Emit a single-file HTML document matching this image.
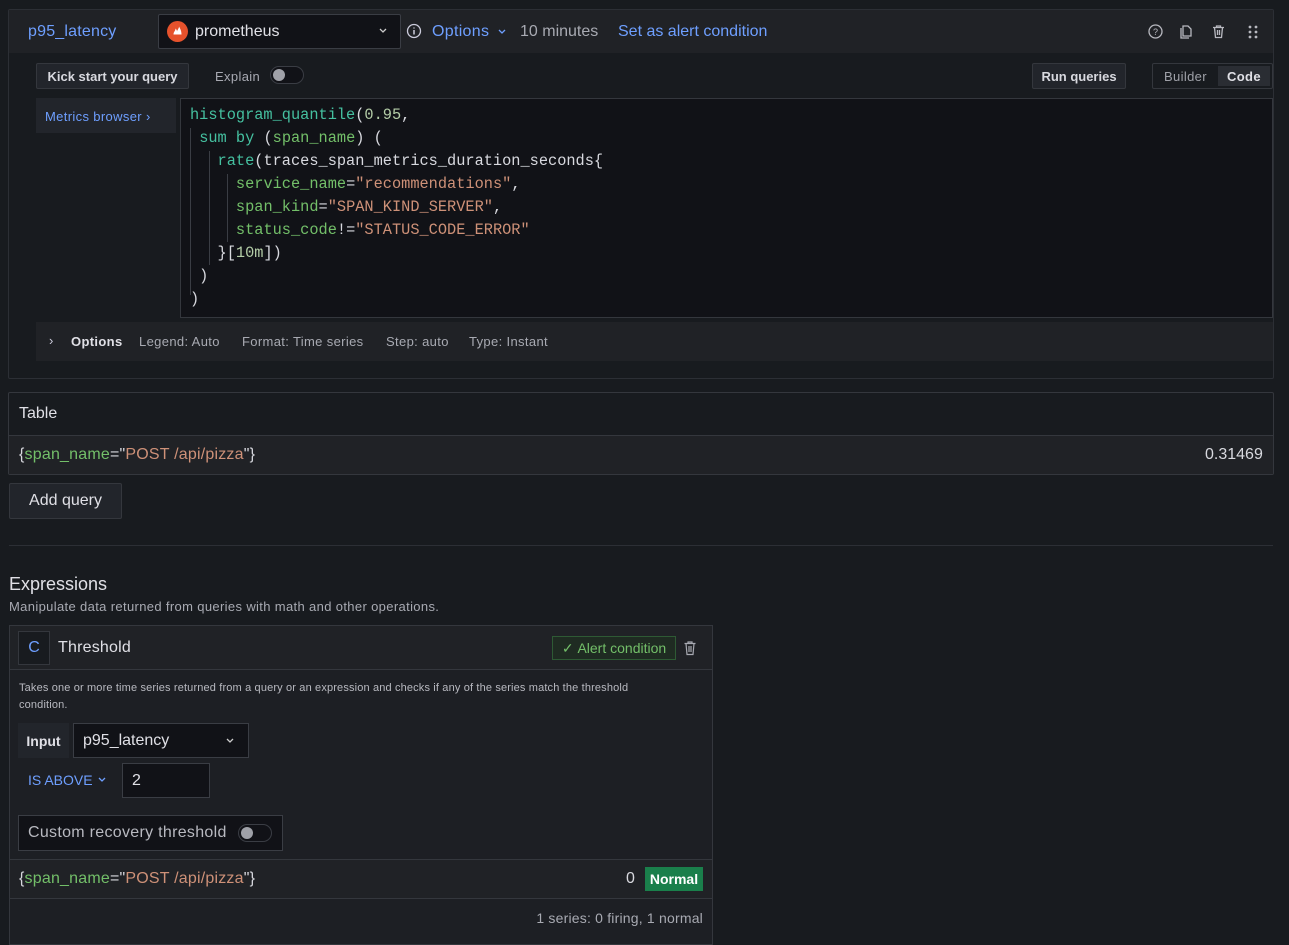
<!DOCTYPE html>
<html><head><meta charset="utf-8"><style>
*{box-sizing:border-box;margin:0;padding:0}
body{width:1289px;height:937px;background:#181b1f;font-family:"Liberation Sans",sans-serif;color:#ccccdc;position:relative;overflow:hidden;font-size:14px}
.a{position:absolute}
.mono{font-family:"Liberation Mono",monospace;font-size:15.3px;white-space:pre}
.bl{color:#6e9fff}
.lg{color:#73bf69}
.s{color:#ce9178}
.fn{color:#45c0a0}
.sm{letter-spacing:0.35px}
.btn{position:absolute;background:#22252b;border:1px solid #34373d;border-radius:2px;color:#d8d9df;font-weight:bold;font-size:13px;display:flex;align-items:center;justify-content:center}
.tog{position:absolute;width:34px;height:18px;border:1px solid #3a3d44;border-radius:9px;background:#111217}
.tog::after{content:"";position:absolute;left:2px;top:2px;width:12px;height:12px;border-radius:50%;background:#9fa1a8}
</style></head><body>
<div class="a" style="left:8px;top:9px;width:1266px;height:370px;border:1px solid #2c2f35;border-radius:2px"></div>
<div class="a" style="left:9px;top:10px;width:1264px;height:43px;background:#202226"></div>
<div class="a bl" style="left:28px;top:23px;font-size:16px;letter-spacing:0.2px">p95_latency</div>
<div class="a" style="left:158px;top:14px;width:243px;height:35px;background:#111217;border:1px solid #3a3d44;border-radius:2px"></div>
<div class="a" style="left:167px;top:21px;width:21px;height:21px;border-radius:50%;background:#e6522c"></div>
<svg class="a" style="left:167px;top:21px" width="21" height="21" viewBox="0 0 21 21"><path d="M7 15h7M7.5 17h6M6.5 13.5c0-3 2-3.5 2-6 1 1 1.5 2 1.5 3 .5-2 2-3 2-5 1 2 2.5 4 2.5 8z" fill="#fff"/></svg>
<div class="a" style="left:195px;top:23px;font-size:16px;color:#e0e0e6">prometheus</div>
<svg class="a" style="left:378px;top:27px" width="10" height="8" viewBox="0 0 10 8"><path d="M2 2l3 3 3-3" stroke="#ccc" fill="none" stroke-width="1.3"/></svg>
<svg class="a" style="left:406px;top:23px" width="16" height="16" viewBox="0 0 16 16"><circle cx="8" cy="8" r="6.5" stroke="#ccccdc" fill="none" stroke-width="1.3"/><path d="M8 7v4.5M8 4.5v1" stroke="#ccccdc" stroke-width="1.5"/></svg>
<div class="a bl" style="left:432px;top:23px;font-size:16px;letter-spacing:0.3px">Options</div>
<svg class="a" style="left:497px;top:28px" width="10" height="8" viewBox="0 0 10 8"><path d="M2 2l3 3 3-3" stroke="#6e9fff" fill="none" stroke-width="1.3"/></svg>
<div class="a" style="left:520px;top:23px;font-size:16px;color:#a8aab2">10 minutes</div>
<div class="a bl" style="left:618px;top:23px;font-size:16px">Set as alert condition</div>
<svg class="a" style="left:1147px;top:23px" width="17" height="17" viewBox="0 0 17 17"><circle cx="8.5" cy="8.5" r="6.5" stroke="#b8b9c0" fill="none" stroke-width="1.3"/><text x="8.5" y="12" font-size="9" fill="#b8b9c0" text-anchor="middle" font-family="Liberation Sans">?</text></svg>
<svg class="a" style="left:1178px;top:23px" width="17" height="17" viewBox="0 0 17 17"><path d="M5 3h5l3 3v7H5z M3 5v10h8" stroke="#b8b9c0" fill="none" stroke-width="1.3"/></svg>
<svg class="a" style="left:1210px;top:23px" width="17" height="17" viewBox="0 0 17 17"><path d="M3 4.5h11M6.5 4.5V3h4v1.5M4.5 4.5l1 10h6l1-10M7.5 7v5M9.5 7v5" stroke="#b8b9c0" fill="none" stroke-width="1.3"/></svg>
<svg class="a" style="left:1247px;top:24px" width="12" height="16" viewBox="0 0 12 16"><g fill="#b8b9c0"><circle cx="3" cy="3" r="1.4"/><circle cx="9" cy="3" r="1.4"/><circle cx="3" cy="8" r="1.4"/><circle cx="9" cy="8" r="1.4"/><circle cx="3" cy="13" r="1.4"/><circle cx="9" cy="13" r="1.4"/></g></svg>

<div class="btn" style="left:36px;top:63px;width:153px;height:26px">Kick start your query</div>
<div class="a sm" style="left:215px;top:69px;font-size:13px;color:#a8aab2">Explain</div>
<div class="tog" style="left:270px;top:66px"></div>
<div class="btn" style="left:1032px;top:63px;width:94px;height:26px">Run queries</div>
<div class="a" style="left:1152px;top:63px;width:121px;height:26px;border:1px solid #34373d;border-radius:2px"></div>
<div class="a sm" style="left:1164px;top:69px;font-size:13px;color:#9fa1a8">Builder</div>
<div class="a" style="left:1218px;top:66px;width:52px;height:20px;background:#2a2d33"></div>
<div class="a sm" style="left:1227px;top:69px;font-size:13px;font-weight:bold;color:#e0e0e6">Code</div>

<div class="a" style="left:36px;top:98px;width:140px;height:35px;background:#22252b"></div>
<div class="a bl sm" style="left:45px;top:109px;font-size:13px">Metrics browser ›</div>
<div class="a" style="left:180px;top:98px;width:1093px;height:220px;background:#111217;border:1px solid #34373d"></div>
<div class="a" style="left:190px;top:128px;width:1px;height:167px;background:#3a3d44"></div>
<div class="a" style="left:209px;top:151px;width:1px;height:114px;background:#3a3d44"></div>
<div class="a" style="left:227px;top:174px;width:1px;height:68px;background:#3a3d44"></div>
<div class="a mono" style="left:190px;top:104px;line-height:23px;color:#d8d9df"><span class="fn">histogram_quantile</span>(<span style="color:#b5cea8">0.95</span>,
 <span class="fn">sum</span> <span class="fn">by</span> (<span class="lg">span_name</span>) (
   <span class="fn">rate</span>(traces_span_metrics_duration_seconds{
     <span class="lg">service_name</span>=<span class="s">"recommendations"</span>,
     <span class="lg">span_kind</span>=<span class="s">"SPAN_KIND_SERVER"</span>,
     <span class="lg">status_code</span>!=<span class="s">"STATUS_CODE_ERROR"</span>
   }[<span style="color:#b5cea8">10m</span>])
 )
)</div>
<div class="a" style="left:36px;top:322px;width:1237px;height:39px;background:#202226"></div>
<div class="a" style="left:49px;top:333px;font-size:13px;color:#ccccdc">›</div>
<div class="a sm" style="left:71px;top:334px;font-size:13px;font-weight:bold;color:#e0e0e6">Options</div>
<div class="a sm" style="left:139px;top:334px;font-size:13px;color:#a8aab2">Legend: Auto</div>
<div class="a sm" style="left:242px;top:334px;font-size:13px;color:#a8aab2">Format: Time series</div>
<div class="a sm" style="left:386px;top:334px;font-size:13px;color:#a8aab2">Step: auto</div>
<div class="a sm" style="left:469px;top:334px;font-size:13px;color:#a8aab2">Type: Instant</div>

<div class="a" style="left:8px;top:392px;width:1266px;height:83px;border:1px solid #34373d;border-radius:2px"></div>
<div class="a" style="left:9px;top:435px;width:1264px;height:39px;background:#202226;border-top:1px solid #34373d"></div>
<div class="a" style="left:19px;top:405px;font-size:16px;color:#e0e0e6">Table</div>
<div class="a" style="left:19px;top:446px;font-size:16px;color:#d8d9df;letter-spacing:0.2px">{<span class="lg">span_name</span>="<span class="s">POST /api/pizza</span>"}</div>
<div class="a" style="left:1205px;top:446px;font-size:16px;color:#d8d9df">0.31469</div>
<div class="btn" style="left:9px;top:483px;width:113px;height:36px;font-size:16px;font-weight:normal;color:#e0e0e6">Add query</div>
<div class="a" style="left:9px;top:545px;width:1264px;height:1px;background:#2c2f35"></div>
<div class="a" style="left:9px;top:574px;font-size:18px;color:#e0e0e6">Expressions</div>
<div class="a sm" style="left:9px;top:599px;font-size:13px;color:#a8aab2">Manipulate data returned from queries with math and other operations.</div>

<div class="a" style="left:9px;top:625px;width:704px;height:320px;border:1px solid #34373d;background:#1d1f24"></div>
<div class="a" style="left:10px;top:626px;width:702px;height:44px;background:#202226;border-bottom:1px solid #34373d"></div>
<div class="a" style="left:18px;top:631px;width:32px;height:34px;border:1px solid #34373d;background:#181b1f;color:#6e9fff;font-size:16px;display:flex;align-items:center;justify-content:center">C</div>
<div class="a" style="left:58px;top:639px;font-size:16px;color:#e0e0e6;letter-spacing:0.2px">Threshold</div>
<div class="a" style="left:552px;top:636px;width:124px;height:24px;border:1px solid #2e5a34;background:#1f2b22;color:#73bf69;font-size:14px;display:flex;align-items:center;justify-content:center">✓&nbsp;Alert condition</div>
<svg class="a" style="left:682px;top:640px" width="16" height="16" viewBox="0 0 16 16"><path d="M2.5 3.5h11M6 3.5V2h4v1.5M4 3.5l1 11h6l1-11M7 6v6M9 6v6" stroke="#a8aab2" fill="none" stroke-width="1.2"/></svg>
<div class="a" style="left:19px;top:680px;font-size:11px;line-height:17px;color:#b8b9c0;width:660px;letter-spacing:0.15px">Takes one or more time series returned from a query or an expression and checks if any of the series match the threshold condition.</div>
<div class="a" style="left:18px;top:723px;width:51px;height:35px;background:#22252b;color:#e0e0e6;font-size:14px;font-weight:bold;display:flex;align-items:center;justify-content:center">Input</div>
<div class="a" style="left:73px;top:723px;width:176px;height:35px;border:1px solid #3a3d44;background:#111217"></div>
<div class="a" style="left:83px;top:732px;font-size:16px;color:#e0e0e6">p95_latency</div>
<svg class="a" style="left:225px;top:737px" width="10" height="8" viewBox="0 0 10 8"><path d="M2 2l3 3 3-3" stroke="#ccc" fill="none" stroke-width="1.3"/></svg>
<div class="a bl" style="left:28px;top:772px;font-size:14px">IS ABOVE</div>
<svg class="a" style="left:97px;top:776px" width="10" height="8" viewBox="0 0 10 8"><path d="M2 2l3 3 3-3" stroke="#6e9fff" fill="none" stroke-width="1.3"/></svg>
<div class="a" style="left:122px;top:763px;width:88px;height:35px;border:1px solid #3a3d44;background:#111217"></div>
<div class="a" style="left:132px;top:772px;font-size:16px;color:#e0e0e6">2</div>
<div class="a" style="left:18px;top:815px;width:265px;height:36px;border:1px solid #3a3d44;background:#111217"></div>
<div class="a" style="left:28px;top:824px;font-size:16px;color:#b8b9c0;letter-spacing:0.3px">Custom recovery threshold</div>
<div class="tog" style="left:238px;top:824px"></div>
<div class="a" style="left:10px;top:859px;width:702px;height:1px;background:#34373d"></div>
<div class="a" style="left:10px;top:898px;width:702px;height:1px;background:#34373d"></div>
<div class="a" style="left:10px;top:860px;width:702px;height:38px;background:#202226"></div>
<div class="a" style="left:19px;top:870px;font-size:16px;color:#d8d9df;letter-spacing:0.2px">{<span class="lg">span_name</span>="<span class="s">POST /api/pizza</span>"}</div>
<div class="a" style="left:626px;top:870px;font-size:16px;color:#d8d9df">0</div>
<div class="a" style="left:645px;top:867px;width:58px;height:24px;background:#1a7f4b;color:#fff;font-weight:bold;font-size:14px;display:flex;align-items:center;justify-content:center">Normal</div>
<div class="a" style="right:586px;top:910px;font-size:14px;color:#a8aab2;letter-spacing:0.2px">1 series: 0 firing, 1 normal</div>
</body></html>
